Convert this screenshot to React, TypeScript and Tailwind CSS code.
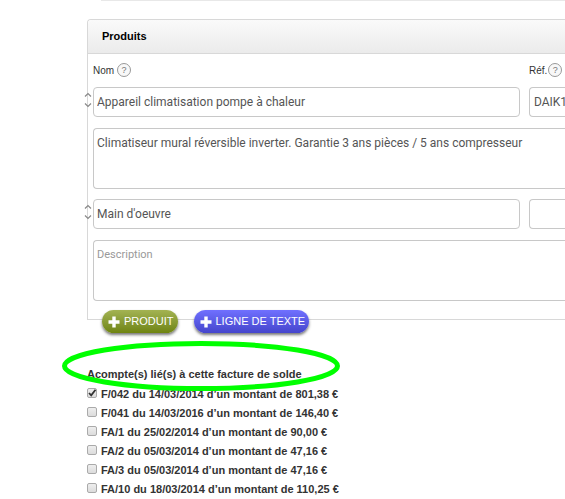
import { useState } from "react"

type Deposit = { id: string; label: string; linked: boolean }

const initialDeposits: Deposit[] = [
  { id: "f042", label: "F/042 du 14/03/2014 d’un montant de 801,38 €", linked: true },
  { id: "f041", label: "F/041 du 14/03/2016 d’un montant de 146,40 €", linked: false },
  { id: "fa1", label: "FA/1 du 25/02/2014 d’un montant de 90,00 €", linked: false },
  { id: "fa2", label: "FA/2 du 05/03/2014 d’un montant de 47,16 €", linked: false },
  { id: "fa3", label: "FA/3 du 05/03/2014 d’un montant de 47,16 €", linked: false },
  { id: "fa10", label: "FA/10 du 18/03/2014 d’un montant de 110,25 €", linked: false },
]

const products = [
  {
    name: "Appareil climatisation pompe à chaleur",
    ref: "DAIK1",
    description: "Climatiseur mural réversible inverter. Garantie 3 ans pièces / 5 ans compresseur",
  },
  { name: "Main d'oeuvre", ref: "", description: "" },
]

const fieldFont = "font-['Roboto',sans-serif] text-[12px] text-[#555]"

function HelpBadge() {
  return (
    <button
      type="button"
      aria-label="Aide"
      className="flex size-[14px] items-center justify-center rounded-full border border-[#999] bg-[#f8f8f8] text-[9px] leading-none text-[#777]"
    >
      ?
    </button>
  )
}

function SortHandle() {
  return (
    <svg
      className="absolute -left-[9px] top-[5px]"
      width="8"
      height="17"
      viewBox="0 0 8 17"
      fill="none"
      stroke="#888"
      strokeWidth="1.2"
    >
      <path d="M1 4.5 4 1.5 7 4.5M1 11.5 4 14.5 7 11.5" />
    </svg>
  )
}

function PlusIcon() {
  return (
    <svg width="12" height="12" viewBox="0 0 12 12" fill="#fff">
      <path d="M4.3 0.5h3.4v3.8h3.8v3.4H7.7v3.8H4.3V7.7H0.5V4.3h3.8z" />
    </svg>
  )
}

function ProductRow({ product, index }: { product: (typeof products)[number]; index: number }) {
  return (
    <div className="flex flex-col gap-[11px]">
      <div className="relative flex gap-[9px]">
        <SortHandle />
        <input
          id={`name-${index}`}
          aria-label="Nom"
          defaultValue={product.name}
          className={`h-[30px] min-w-0 flex-1 rounded-[4px] border border-[#c8c8c8] bg-white px-[3px] ${fieldFont}`}
        />
        <input
          id={`ref-${index}`}
          aria-label="Réf."
          defaultValue={product.ref}
          className={`h-[30px] w-9 rounded-l-[4px] border border-r-0 border-[#c8c8c8] bg-white pl-1 ${fieldFont}`}
        />
      </div>
      <textarea
        aria-label="Description"
        placeholder="Description"
        defaultValue={product.description}
        className={`block h-[61px] w-full resize-none overflow-hidden rounded-l-[4px] border border-r-0 border-[#c8c8c8] bg-white px-[3px] py-[5px] leading-[18px] placeholder:text-[11px] placeholder:text-[#999] ${fieldFont}`}
      />
    </div>
  )
}

export default function App() {
  const [deposits, setDeposits] = useState(initialDeposits)

  const toggle = (id: string) => {
    setDeposits((prev) => prev.map((d) => (d.id === id ? { ...d, linked: !d.linked } : d)))
  }

  return (
    <main className="overflow-hidden bg-white pl-[87px] font-['Liberation_Sans',Arial,sans-serif] text-[11px] text-[#333]">
      <div className="ml-[14px] border-t border-[#e8e8e8]" />

      <section className="mt-[18px] rounded-tl-[4px] border border-r-0 border-[#d8d8d8]">
        <h2 className="flex h-[34px] items-center rounded-tl-[3px] border-b border-[#d8d8d8] bg-linear-to-b from-[#fafafa] to-[#ebebeb] pl-[14px] font-bold text-black">
          Produits
        </h2>
        <div className="pl-[5px] pt-[9px]">
          <div className="mb-[10px] flex h-[14px] items-center gap-[9px] text-[10px]">
            <div className="flex flex-1 items-center gap-[3px]">
              <label htmlFor="name-0">Nom</label>
              <HelpBadge />
            </div>
            <div className="flex w-9 items-center gap-px">
              <label htmlFor="ref-0">Réf.</label>
              <HelpBadge />
            </div>
          </div>
          <div className="flex flex-col gap-[10px]">
            {products.map((product, index) => (
              <ProductRow key={product.name} product={product} index={index} />
            ))}
          </div>
        </div>
        <div className="-mb-[14px] mt-[9px] flex gap-4 pl-[14px] text-[11px] text-white">
          <button
            type="button"
            className="flex h-[23px] items-center gap-1 rounded-full bg-linear-to-b from-[#a3b352] to-[#6f840f] pl-[6px] pr-1 shadow-[0_2px_3px_#777]"
          >
            <PlusIcon />
            PRODUIT
          </button>
          <button
            type="button"
            className="flex h-[23px] items-center gap-1 rounded-full bg-linear-to-b from-[#7070ff] to-[#4545cc] pl-[6px] pr-1 shadow-[0_2px_3px_#777]"
          >
            <PlusIcon />
            LIGNE DE TEXTE
          </button>
        </div>
      </section>

      <section className="relative mt-[45px] font-bold">
        <h3 className="h-5 leading-[19px]">Acompte(s) lié(s) à cette facture de solde</h3>
        <ul>
          {deposits.map((deposit) => (
            <li key={deposit.id} className="flex h-[19px] items-center gap-1">
              <span className="grid">
                <input
                  id={deposit.id}
                  type="checkbox"
                  checked={deposit.linked}
                  onChange={() => toggle(deposit.id)}
                  className="col-start-1 row-start-1 mb-1 size-[10px] appearance-none rounded-[2px] border border-[#aaa] bg-linear-to-b from-[#eee] to-[#dcdcdc]"
                />
                {deposit.linked && (
                  <svg
                    className="pointer-events-none col-start-1 row-start-1"
                    width="10"
                    height="10"
                    viewBox="0 0 10 10"
                    fill="none"
                    stroke="#333"
                    strokeWidth="1.8"
                  >
                    <path d="M2 5 4.2 7.3 8.5 1.8" />
                  </svg>
                )}
              </span>
              <label htmlFor={deposit.id}>{deposit.label}</label>
            </li>
          ))}
        </ul>
        {/* hand-drawn marker around the title */}
        <svg
          className="pointer-events-none absolute -left-[26px] -top-[26px]"
          width="280"
          height="54"
          viewBox="0 0 280 54"
          fill="none"
          stroke="#00ff00"
          strokeWidth="5"
        >
          <ellipse cx="140" cy="27" rx="136.5" ry="22.5" />
        </svg>
      </section>
    </main>
  )
}
